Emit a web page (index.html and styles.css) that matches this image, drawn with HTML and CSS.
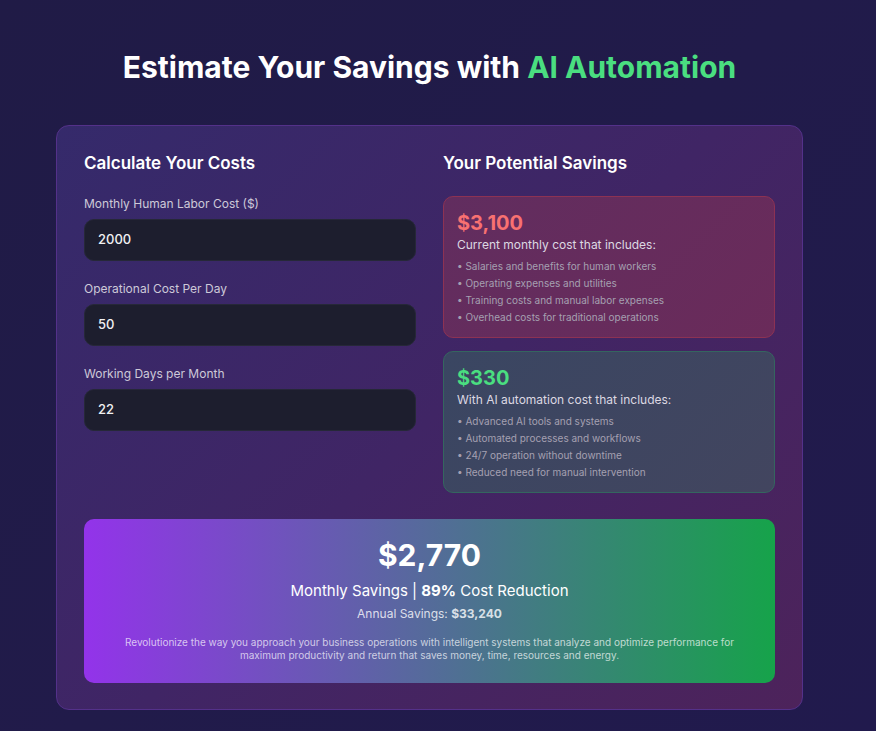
FILE: index.html
```html
<!DOCTYPE html>
<html lang="en">
<head>
  <meta charset="utf-8">
  <meta name="viewport" content="width=device-width, initial-scale=1">
  <title>AI Automation Savings Calculator</title>
  <link rel="stylesheet" href="styles.css">
</head>
<body>
  <main class="page">
    <h1 class="title">Estimate Your Savings with <span class="accent">AI Automation</span></h1>
    <section class="card">
      <div class="columns">
        <form class="costs">
          <h2 class="heading">Calculate Your Costs</h2>
          <div class="field">
            <label for="labor">Monthly Human Labor Cost ($)</label>
            <input id="labor" type="text" inputmode="numeric" value="2000">
          </div>
          <div class="field">
            <label for="operations">Operational Cost Per Day</label>
            <input id="operations" type="text" inputmode="numeric" value="50">
          </div>
          <div class="field">
            <label for="days">Working Days per Month</label>
            <input id="days" type="text" inputmode="numeric" value="22">
          </div>
        </form>
        <div class="savings">
          <h2 class="heading">Your Potential Savings</h2>
          <article class="box box-current">
            <p class="amount">$3,100</p>
            <p class="caption">Current monthly cost that includes:</p>
            <ul class="list">
              <li>• Salaries and benefits for human workers</li>
              <li>• Operating expenses and utilities</li>
              <li>• Training costs and manual labor expenses</li>
              <li>• Overhead costs for traditional operations</li>
            </ul>
          </article>
          <article class="box box-ai">
            <p class="amount">$330</p>
            <p class="caption">With AI automation cost that includes:</p>
            <ul class="list">
              <li>• Advanced AI tools and systems</li>
              <li>• Automated processes and workflows</li>
              <li>• 24/7 operation without downtime</li>
              <li>• Reduced need for manual intervention</li>
            </ul>
          </article>
        </div>
      </div>
      <div class="banner">
        <p class="total">$2,770</p>
        <p class="summary">Monthly Savings | <strong>89%</strong> Cost Reduction</p>
        <p class="annual">Annual Savings: <strong>$33,240</strong></p>
        <p class="note">Revolutionize the way you approach your business operations with intelligent systems that analyze and optimize performance for maximum productivity and return that saves money, time, resources and energy.</p>
      </div>
    </section>
  </main>
</body>
</html>
```
FILE: styles.css
```css
* {
  box-sizing: border-box;
}

body {
  margin: 0;
  min-height: 100vh;
  background: linear-gradient(135deg, #201b46 0%, #211b4a 50%, #211a4d 100%);
  color: #fff;
  font-family: Inter, "Liberation Sans", sans-serif;
}

h1, h2, p, ul {
  margin: 0;
  padding: 0;
}

.page {
  padding: 49px 73px 21px 56px;
}

.title {
  margin-bottom: 40px;
  font-size: 30px;
  line-height: 36px;
  font-weight: 700;
  text-align: center;
}

.accent {
  color: #4ade80;
}

.card {
  padding: 27px 27px 26px;
  border: 1px solid #54318a;
  border-radius: 13px;
  background: linear-gradient(135deg, #352a6b 0%, #402565 50%, #4d235b 100%);
}

.columns {
  display: grid;
  grid-template-columns: 1fr 1fr;
  gap: 27px;
  margin-bottom: 26px;
}

.heading {
  margin-bottom: 23px;
  font-size: 17px;
  line-height: 20px;
  font-weight: 600;
}

.field {
  display: flex;
  flex-direction: column;
  gap: 7px;
  margin-bottom: 20px;
}

.field label {
  color: #cdc9d8;
  font-size: 12px;
  line-height: 16px;
  font-weight: 400;
}

.field input {
  width: 100%;
  height: 42px;
  padding: 0 13px 2px;
  border: 1px solid #262838;
  border-radius: 10px;
  background: #1d1e2e;
  color: #f0f0f2;
  font-family: inherit;
  font-size: 13px;
  font-weight: 500;
}

.box {
  padding: 13px;
  border: 1px solid;
  border-radius: 10px;
}

.box + .box {
  margin-top: 13px;
}

.box-current {
  border-color: #8d3253;
  background: linear-gradient(135deg, #612d5f, #6a2b5a);
}

.box-ai {
  border-color: #34665f;
  background: linear-gradient(135deg, #3a4662, #42455f);
}

.amount {
  font-size: 20px;
  line-height: 26px;
  font-weight: 700;
}

.box-current .amount {
  color: #f87171;
}

.box-ai .amount {
  color: #4ade80;
}

.caption {
  margin-bottom: 6px;
  color: #dcd8e2;
  font-size: 12px;
  line-height: 17px;
  font-weight: 400;
}

.list {
  display: grid;
  gap: 3px;
  list-style: none;
  color: #a5a0b1;
  font-size: 10px;
  line-height: 14px;
  font-weight: 400;
}

.banner {
  padding: 20px 27px 21px;
  border-radius: 10px;
  background: linear-gradient(90deg, #9333ea, #16a34a);
  text-align: center;
}

.total {
  margin-bottom: 8px;
  font-size: 30px;
  line-height: 33px;
  font-weight: 700;
}

.summary {
  margin-bottom: 4px;
  font-size: 15px;
  line-height: 22px;
  font-weight: 400;
}

.annual {
  margin-bottom: 14px;
  color: rgba(255, 255, 255, 0.8);
  font-size: 12px;
  line-height: 16px;
  font-weight: 400;
}

.note {
  color: rgba(255, 255, 255, 0.7);
  font-size: 10px;
  line-height: 13px;
  font-weight: 400;
}
```
